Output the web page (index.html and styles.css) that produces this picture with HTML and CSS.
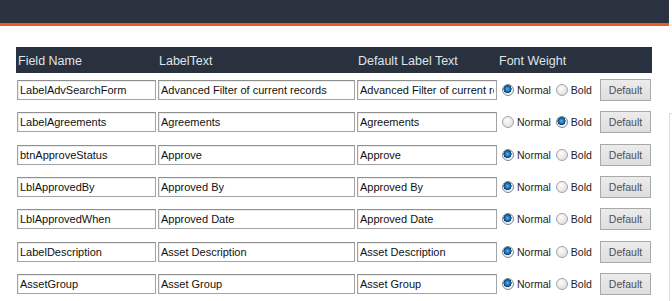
FILE: index.html
```html
<!DOCTYPE html>
<html lang="en">
<head>
  <meta charset="UTF-8" />
  <title>Label Settings</title>
  <meta name="viewport" content="width=device-width, initial-scale=1" />
  <link rel="stylesheet" href="styles.css">
</head>
<body>
  <div class="topbar"></div>

  <div class="page">
    <div class="content">
      <div class="head-row">
        <div class="head-cell">Field Name</div>
        <div class="head-cell">LabelText</div>
        <div class="head-cell">Default Label Text</div>
        <div class="head-cell">Font Weight</div>
        <div class="head-cell"></div>
      </div>

      <div class="rows">
        <div class="row">
          <input class="f-name" type="text" value="LabelAdvSearchForm" />
          <input class="f-label" type="text" value="Advanced Filter of current records" />
          <input class="f-default" type="text" value="Advanced Filter of current records" />
          <div class="weight">
            <label><input type="radio" name="w1" checked /> Normal</label>
            <label><input type="radio" name="w1" /> Bold</label>
          </div>
          <button class="btn-default">Default</button>
        </div>

        <div class="row">
          <input class="f-name" type="text" value="LabelAgreements" />
          <input class="f-label" type="text" value="Agreements" />
          <input class="f-default" type="text" value="Agreements" />
          <div class="weight">
            <label><input type="radio" name="w2" /> Normal</label>
            <label><input type="radio" name="w2" checked /> Bold</label>
          </div>
          <button class="btn-default">Default</button>
        </div>

        <div class="row">
          <input class="f-name" type="text" value="btnApproveStatus" />
          <input class="f-label" type="text" value="Approve" />
          <input class="f-default" type="text" value="Approve" />
          <div class="weight">
            <label><input type="radio" name="w3" checked /> Normal</label>
            <label><input type="radio" name="w3" /> Bold</label>
          </div>
          <button class="btn-default">Default</button>
        </div>

        <div class="row">
          <input class="f-name" type="text" value="LblApprovedBy" />
          <input class="f-label" type="text" value="Approved By" />
          <input class="f-default" type="text" value="Approved By" />
          <div class="weight">
            <label><input type="radio" name="w4" checked /> Normal</label>
            <label><input type="radio" name="w4" /> Bold</label>
          </div>
          <button class="btn-default">Default</button>
        </div>

        <div class="row">
          <input class="f-name" type="text" value="LblApprovedWhen" />
          <input class="f-label" type="text" value="Approved Date" />
          <input class="f-default" type="text" value="Approved Date" />
          <div class="weight">
            <label><input type="radio" name="w5" checked /> Normal</label>
            <label><input type="radio" name="w5" /> Bold</label>
          </div>
          <button class="btn-default">Default</button>
        </div>

        <div class="row">
          <input class="f-name" type="text" value="LabelDescription" />
          <input class="f-label" type="text" value="Asset Description" />
          <input class="f-default" type="text" value="Asset Description" />
          <div class="weight">
            <label><input type="radio" name="w6" checked /> Normal</label>
            <label><input type="radio" name="w6" /> Bold</label>
          </div>
          <button class="btn-default">Default</button>
        </div>

        <div class="row">
          <input class="f-name" type="text" value="AssetGroup" />
          <input class="f-label" type="text" value="Asset Group" />
          <input class="f-default" type="text" value="Asset Group" />
          <div class="weight">
            <label><input type="radio" name="w7" checked /> Normal</label>
            <label><input type="radio" name="w7" /> Bold</label>
          </div>
          <button class="btn-default">Default</button>
        </div>
      </div>
    </div>
    <div class="rail"></div>
  </div>
</body>
</html>
```

FILE: styles.css
```css
body {
  margin: 0;
  background: #fff;
  font-family: "Liberation Sans", Arial, sans-serif;
  color: #222;
  overflow: hidden;
}

.topbar {
  width: 669px;
  height: 23px;
  background: #2b3240;
  border-bottom: 3px solid #ee5a24;
}

.page { display: flex; align-items: flex-start; }
.content { width: 652px; padding: 21px 0 0 16px; box-sizing: border-box; }
.rail {
  margin-left: 17px;
  margin-top: 87px;
  width: 3px;
  height: 200px;
  border: 1px solid #dcdcdc;
  border-right: none;
  border-radius: 2px 0 0 0;
}

.head-row,
.row {
  display: grid;
  grid-template-columns: 141px 199px 141px 101px 54px;
}

.head-row {
  height: 26px;
  background: #29303e;
  color: #dfe5ec;
  font-size: 12.5px;
  line-height: 26px;
}
.head-cell { padding: 1px 0 0 2px; white-space: nowrap; }

.rows { padding-top: 1px; }
.row { height: 32.33px; align-items: center; }

.row input[type="text"] {
  height: 20px;
  box-sizing: border-box;
  margin: 0 0 0 1px;
  padding: 0 2px;
  border: 1px solid #a3a3a3;
  border-top-color: #8f8f8f;
  box-shadow: inset 1px 1px 0 #ececec;
  font-family: "Liberation Sans", Arial, sans-serif;
  font-size: 11px;
  color: #111;
  background: #fff;
}
.f-name { width: 139px; }
.f-label { width: 197px; }
.f-default { width: 140px; }

.weight {
  display: flex;
  align-items: center;
  gap: 5px;
  padding-left: 5px;
  font-size: 10.5px;
  white-space: nowrap;
}
.weight label { display: flex; align-items: center; gap: 3px; }

.weight input[type="radio"] {
  appearance: none;
  -webkit-appearance: none;
  width: 12px;
  height: 12px;
  margin: 0;
  border-radius: 50%;
  border: 1px solid #a4a4a4;
  background: radial-gradient(circle at 40% 35%, #fdfdfd 0, #e6e6e6 60%, #d3d3d3 100%);
  box-sizing: border-box;
}
.weight input[type="radio"]:checked {
  background: radial-gradient(circle at 45% 40%, #5fb4ec 0, #1d6fb3 30%, #0d3d6b 48%, #f2f6fa 52%, #dfe5ec 100%);
  border-color: #7e8a96;
}

.btn-default {
  width: 51px;
  height: 22px;
  margin-left: 2px;
  padding: 0;
  border: 1px solid #a9a9a9;
  background: linear-gradient(#ececec, #dedede);
  color: #4f4f4f;
  font-family: "Liberation Sans", Arial, sans-serif;
  font-size: 10.5px;
  cursor: pointer;
}
```
